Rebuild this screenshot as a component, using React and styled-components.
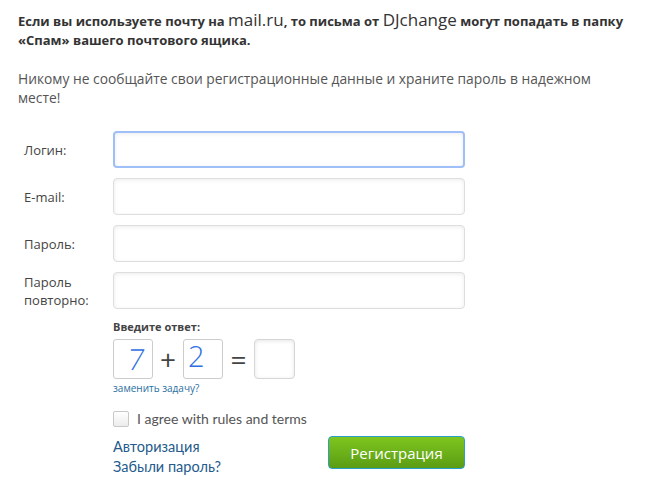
import React from 'react';
import styled, { createGlobalStyle } from 'styled-components';

const GlobalStyle = createGlobalStyle`
  body {
    margin: 0;
    background: #fff;
    font-family: "Open Sans", "Liberation Sans", sans-serif;
    color: #444;
  }
`;

const Page = styled.div`
  width: 647px;
  height: 500px;
  padding: 10px 18px 0 18px;
  box-sizing: border-box;
`;

const Notice = styled.p`
  margin: 0;
  font-size: 13px;
  font-weight: 700;
  line-height: 19px;
  color: #333;
`;

const Big = styled.span`
  font-size: 17px;
  font-weight: 400;
  color: #333;
`;

const Advice = styled.p`
  margin: 19px 0 0 0;
  max-width: 590px;
  font-size: 13.8px;
  line-height: 19px;
  color: #555;
`;

const Form = styled.div`
  margin-top: 24px;
  padding-left: 6px;
  display: flex;
  flex-direction: column;
`;

const Fields = styled.div`
  display: flex;
  flex-direction: column;
  gap: 10px;
`;

const Row = styled.div`
  display: flex;
  align-items: center;
`;

const Label = styled.label`
  width: 89px;
  font-size: 13px;
  line-height: 18px;
  color: #444;
`;

const Input = styled.div`
  width: 352px;
  height: 37px;
  box-sizing: border-box;
  border-radius: 4px;
  border: ${p => (p.focus ? '2px solid #9ebff7' : '1px solid #dedede')};
  background: #fff;
  box-shadow: inset 0 1px 4px rgba(0, 0, 0, 0.08);
`;

const Captcha = styled.div`
  margin-left: 89px;
  margin-top: 11px;
  display: flex;
  flex-direction: column;
`;

const CaptchaTitle = styled.div`
  font-size: 11px;
  font-weight: 700;
  color: #444;
  line-height: 14px;
`;

const Equation = styled.div`
  display: flex;
  align-items: center;
  margin-top: 5px;
`;

const Digit = styled.div`
  width: 40px;
  height: 40px;
  box-sizing: border-box;
  border: 1px solid #ccc;
  border-radius: 3px;
  display: flex;
  justify-content: ${p => (p.left ? 'flex-start' : 'center')};
  align-items: ${p => (p.left ? 'flex-start' : 'center')};
  padding-left: ${p => (p.left ? '4px' : '6px')};
  font-family: "Open Sans", sans-serif;
  font-weight: 300;
  font-size: 29px;
  line-height: 32px;
  color: #2f6fe0;
  & > span {
    display: inline-block;
    transform: ${p => (p.left ? 'none' : 'skewX(-8deg)')};
  }
`;

const Sign = styled.span`
  font-size: 28px;
  line-height: 40px;
  color: #444;
  width: ${p => p.w}px;
  text-align: center;
`;

const Answer = styled.div`
  width: 41px;
  height: 40px;
  box-sizing: border-box;
  border: 1px solid #d6d6d6;
  border-radius: 4px;
  box-shadow: inset 0 1px 4px rgba(0, 0, 0, 0.1);
`;

const Replace = styled.a`
  font-size: 10px;
  color: #2a6fa0;
  line-height: 14px;
  margin-top: 2px;
`;

const Agree = styled.label`
  margin: 15px 0 0 89px;
  display: flex;
  align-items: center;
  gap: 8px;
  font-family: Lato, "Open Sans", sans-serif;
  font-size: 14px;
  color: #555;
`;

const Check = styled.span`
  width: 16px;
  height: 16px;
  box-sizing: border-box;
  border: 1px solid #c8c8c8;
  border-radius: 2px;
  background: linear-gradient(#fff, #ececec);
`;

const Bottom = styled.div`
  margin: 9px 0 0 89px;
  display: flex;
  justify-content: space-between;
  width: 352px;
`;

const Links = styled.div`
  display: flex;
  flex-direction: column;
  font-family: Lato, "Open Sans", sans-serif;
  font-size: 14.5px;
  line-height: 20px;
  padding-top: 1px;
`;

const Link = styled.a`
  color: #245b8c;
  text-decoration: none;
`;

const Button = styled.button`
  width: 137px;
  height: 33px;
  border: 1px solid #2aa0c8;
  border-radius: 4px;
  background: linear-gradient(#7ec61f, #5b9c14);
  color: #fff;
  font-family: "Open Sans", sans-serif;
  font-size: 15px;
  padding: 0;
`;

const fields = [
  { label: 'Логин:', focus: true },
  { label: 'E-mail:' },
  { label: 'Пароль:' },
  { label: <>Пароль<br />повторно:</> },
];

export default function App() {
  return (
    <>
      <GlobalStyle />
      <Page>
        <Notice>
          Если вы используете почту на <Big>mail.ru</Big>, то письма от <Big>DJchange</Big> могут попадать в папку
          «Спам» вашего почтового ящика.
        </Notice>
        <Advice>
          Никому не сообщайте свои регистрационные данные и храните пароль в надежном месте!
        </Advice>
        <Form>
          <Fields>
            {fields.map((f, i) => (
              <Row key={i}>
                <Label>{f.label}</Label>
                <Input focus={f.focus} />
              </Row>
            ))}
          </Fields>
          <Captcha>
            <CaptchaTitle>Введите ответ:</CaptchaTitle>
            <Equation>
              <Digit><span>7</span></Digit>
              <Sign w={30}>+</Sign>
              <Digit left><span>2</span></Digit>
              <Sign w={31}>=</Sign>
              <Answer />
            </Equation>
            <Replace>заменить задачу?</Replace>
          </Captcha>
          <Agree>
            <Check />
            I agree with rules and terms
          </Agree>
          <Bottom>
            <Links>
              <Link>Авторизация</Link>
              <Link>Забыли пароль?</Link>
            </Links>
            <Button>Регистрация</Button>
          </Bottom>
        </Form>
      </Page>
    </>
  );
}
